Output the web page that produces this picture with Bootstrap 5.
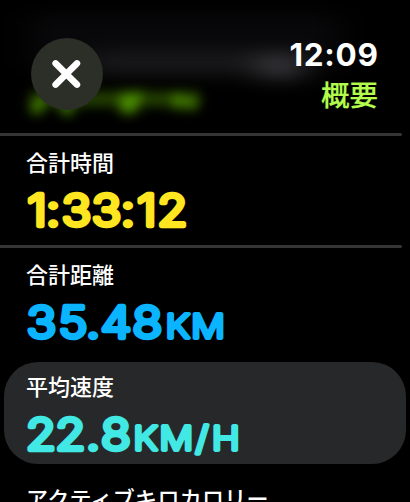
<!DOCTYPE html>
<html lang="ja">
<head>
<meta charset="utf-8">
<meta name="viewport" content="width=device-width, initial-scale=1">
<title>概要</title>
<link href="https://cdn.jsdelivr.net/npm/bootstrap@5.3.0/dist/css/bootstrap.min.css" rel="stylesheet">
<style>
body{background:#000;color:#fff;font-family:Inter,"Noto Sans CJK JP",sans-serif}
.watch{width:410px;height:502px}
.top-area{height:133px;padding:38px 32px 0 31px}
.glow{z-index:0}
.close-btn{width:72px;height:72px;background:#2c2e28;z-index:1}
.titles{z-index:1}
.clock{font-size:31.5px;font-weight:700;line-height:34px;letter-spacing:.7px;margin-right:-.7px}
.heading{font-size:28.5px;font-weight:500;line-height:40px;color:#b3fc4e;margin-top:4px;-webkit-text-stroke:.2px #b3fc4e}
.metric{height:112px;padding-left:26px}
.metric.first{height:109px}
.rule{height:3px;width:402px;background:#353535;border-radius:0 2px 2px 0}
.caption{font-size:22px;font-weight:500;line-height:26px;padding-top:14px;white-space:nowrap}
.selected{margin:2px 4px 0;width:402px;height:102px;padding-left:22px;background:#272829;border-radius:34px}
.selected .caption{padding-top:12px}
.last .caption{padding-top:22px;letter-spacing:.3px}
.value{height:52px;width:240px;overflow:visible;font-family:Inter,sans-serif;font-size:43px;font-weight:300;stroke-width:4.5px;stroke-linejoin:round;stroke-linecap:round;text-anchor:middle}
.value .unit{font-size:33px;font-weight:300;stroke-width:3.8px}
.yellow{fill:#ffe620;stroke:#ffe620}.blue{fill:#0ab4ff;stroke:#0ab4ff}.cyan{fill:#42e8e4;stroke:#42e8e4}
</style>
</head>
<body>
<main class="watch overflow-hidden d-flex flex-column">
<header class="top-area position-relative d-flex justify-content-between flex-shrink-0">
<svg class="glow position-absolute top-0 start-0" width="410" height="133" aria-hidden="true">
<defs><filter id="soft" color-interpolation-filters="sRGB" x="-20%" y="-60%" width="140%" height="220%"><feGaussianBlur stdDeviation="6"/></filter><filter id="haze" color-interpolation-filters="sRGB" x="-30%" y="-100%" width="160%" height="300%"><feGaussianBlur stdDeviation="16 9"/></filter></defs>
<g filter="url(#haze)"><rect x="30" y="14" width="310" height="56" fill="#08080a"/><rect x="90" y="52" width="190" height="22" fill="#1a1a1c"/><rect x="258" y="54" width="45" height="24" fill="#38383c"/></g>
<g filter="url(#soft)"><rect x="30" y="92" width="170" height="14" fill="#254400"/><path d="M33 112 43 101M62 106 72 112M120 99 136 97 132 108 120 108M178 94 178 108M188 99 194 108" fill="none" stroke="#4b8f00" stroke-width="10"/></g>
</svg>
<button class="close-btn btn rounded-circle border-0 p-0 d-flex align-items-center justify-content-center" aria-label="閉じる"><svg width="32" height="32" viewBox="0 0 32 32" fill="none" stroke="#fff" stroke-width="6.5" stroke-linecap="round"><path d="M4.6 5.400 26 26.600M26 5.400 4.600 26.600"/></svg></button>
<div class="titles text-end"><div class="clock">12:09</div><div class="heading">概要</div></div>
</header>
<section class="flex-shrink-0"><div class="rule"></div><div class="metric first"><div class="caption">合計時間</div>
<svg class="value yellow d-block"><text transform="scale(1.13 1)" y="50" x="9.8 23.9 44.7 71.2 90.2 107 129.6">1:33:12</text></svg></div></section>
<section class="flex-shrink-0"><div class="rule"></div><div class="metric"><div class="caption">合計距離</div>
<svg class="value blue d-block"><text transform="scale(1.13 1)" y="50"><tspan x="13.8 41.6 59.3 79.6 107.5">35.48</tspan><tspan class="unit" x="134.3 161">KM</tspan></text></svg></div></section>
<section class="selected flex-shrink-0"><div class="caption">平均速度</div>
<svg class="value cyan d-block"><text transform="scale(1.13 1)" y="50"><tspan x="13.3 39.4 59.3 79.6">22.8</tspan><tspan class="unit" x="105.8 133 155.8 176.8">KM/H</tspan></text></svg></section>
<section class="metric last flex-shrink-0"><div class="caption">アクティブキロカロリー</div></section>
</main>
<script src="https://cdn.jsdelivr.net/npm/bootstrap@5.3.0/dist/js/bootstrap.bundle.min.js"></script>
</body>
</html>
